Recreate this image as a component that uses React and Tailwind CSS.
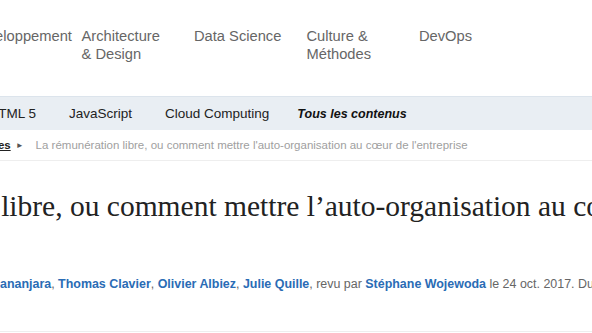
export default function App() {
  const topics = [
    ['Développement'],
    ['Architecture', '& Design'],
    ['Data Science'],
    ['Culture &', 'Méthodes'],
    ['DevOps'],
  ];
  const subnav = ['HTML 5', 'JavaScript', 'Cloud Computing'];

  return (
    <div className="w-[592px] h-[333px] overflow-hidden bg-white font-['Liberation_Sans',Arial,sans-serif]">
      {/* Topics */}
      <div className="h-[96px] flex pt-[27px] ml-[-31px] whitespace-nowrap">
        {topics.map((t, i) => (
          <div key={i} className="w-[112.5px] shrink-0 text-[14.7px] leading-[18px] text-[#666]">
            {t.map((l) => (
              <div key={l}>{l}</div>
            ))}
          </div>
        ))}
      </div>

      {/* Sub nav */}
      <div className="h-[34px] bg-[#e9eef3] border-t border-[#dce4ec] flex items-center whitespace-nowrap ml-[-28px] pt-px">
        {subnav.map((s) => (
          <span key={s} className="text-[13.5px] text-[#222] px-[16.5px]">
            {s}
          </span>
        ))}
        <span className="text-[12.5px] text-[#111] font-bold italic pl-[11.5px]">Tous les contenus</span>
      </div>

      {/* Breadcrumb */}
      <div className="h-[31px] flex items-center border-b border-[#eee] whitespace-nowrap text-[11.5px] ml-[-43px] pt-[2px]">
        <a className="font-bold underline text-[#222]">Méthodes</a>
        <span className="text-[8px] text-[#555] ml-[5px]">►</span>
        <span className="text-[#a0a0a0] ml-[12px]">
          La rémunération libre, ou comment mettre l'auto-organisation au cœur de l'entreprise
        </span>
      </div>

      {/* Title */}
      <h1 className="mt-[28px] ml-[-202px] whitespace-nowrap font-['Liberation_Serif','Times_New_Roman',serif] text-[29.5px] leading-[34px] text-[#222]">
        La rémunération libre, ou comment mettre l’auto-organisation au cœur de l’entreprise
      </h1>

      {/* Authors */}
      <div className="mt-[52px] whitespace-nowrap text-[12.45px] text-[#666]">
        <a className="font-bold text-[#2a6cb5]">ananjara</a>, <a className="font-bold text-[#2a6cb5]">Thomas Clavier</a>,{' '}
        <a className="font-bold text-[#2a6cb5]">Olivier Albiez</a>, <a className="font-bold text-[#2a6cb5]">Julie Quille</a>, revu par{' '}
        <a className="font-bold text-[#2a6cb5]">Stéphane Wojewoda</a> le 24 oct. 2017. Durée de lecture estimée : 14 minutes
      </div>

      <div className="mt-[37px] border-b border-[#eee]" />
    </div>
  );
}
